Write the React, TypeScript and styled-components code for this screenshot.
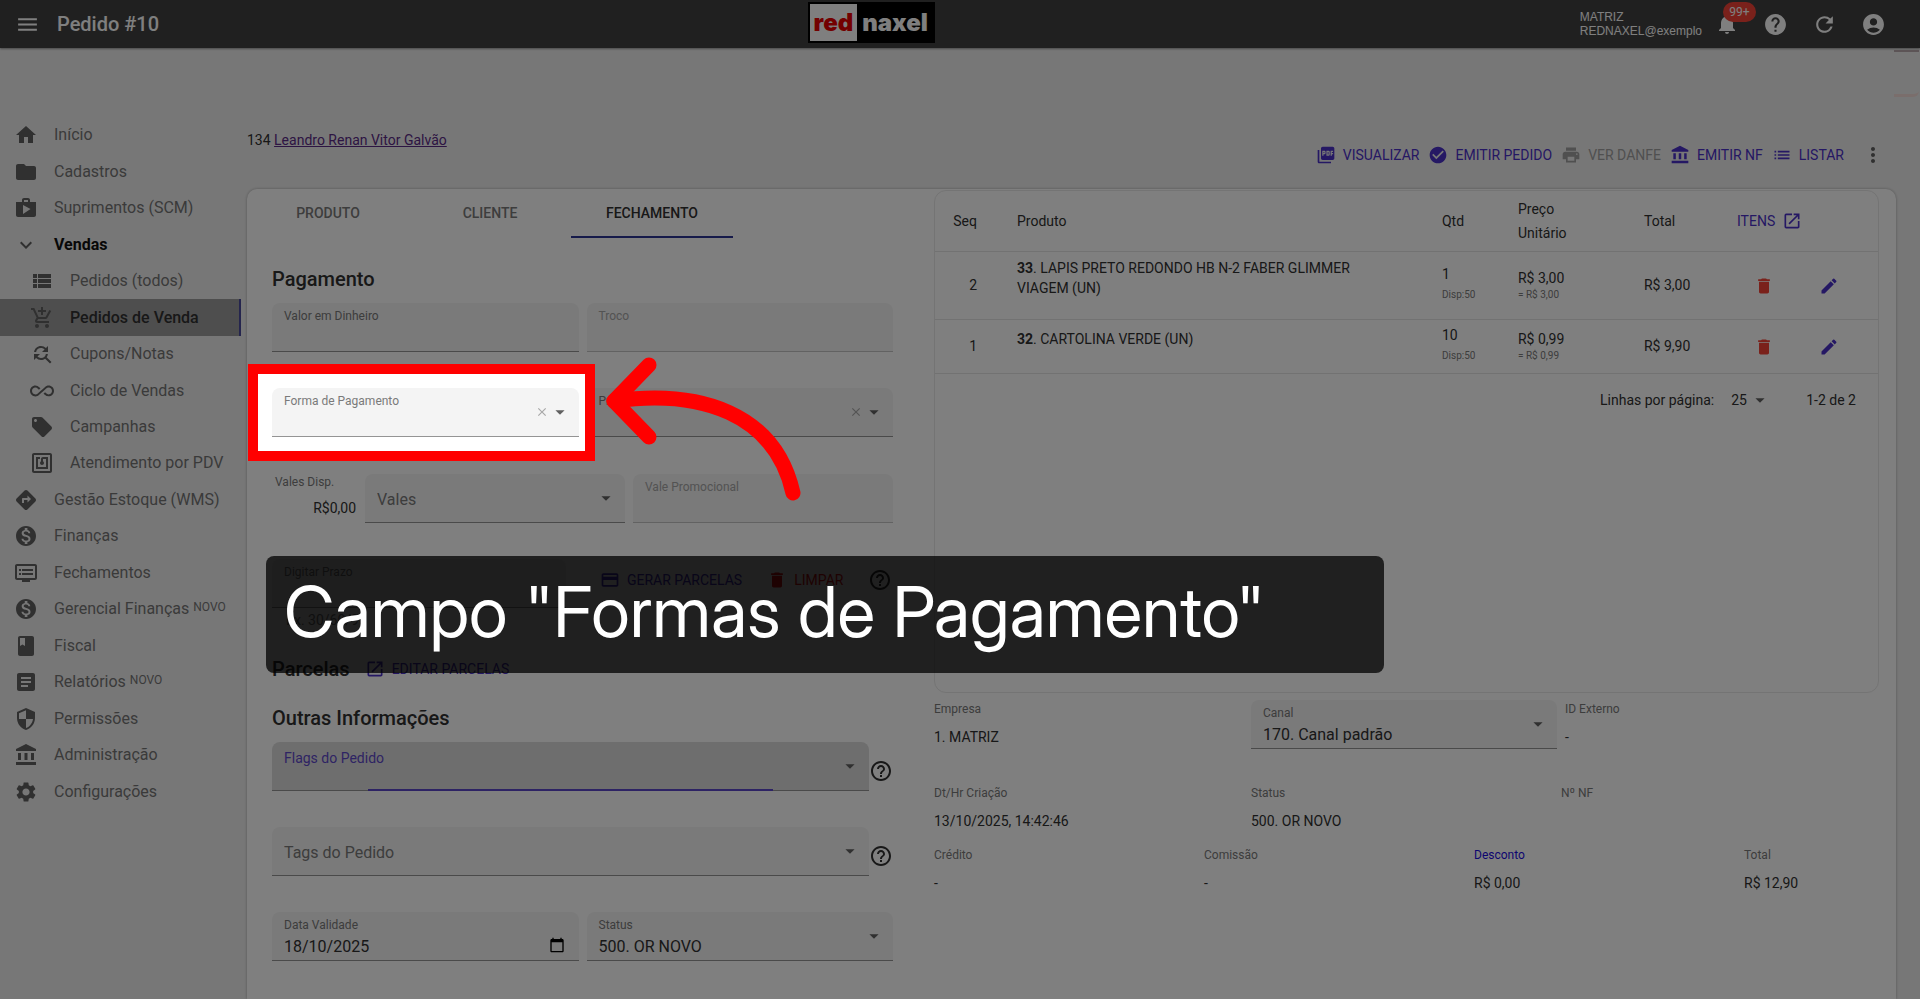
import React from "react";
import styled, { createGlobalStyle, css } from "styled-components";
import type { IconType } from "react-icons";
import {
  MdAccountBalance,
  MdAccountCircle,
  MdAddShoppingCart,
  MdAllInclusive,
  MdArrowDropDown,
  MdArticle,
  MdBook,
  MdCalendarToday,
  MdCheckCircle,
  MdClose,
  MdDelete,
  MdDirections,
  MdDvr,
  MdEdit,
  MdExpandMore,
  MdFindReplace,
  MdFolder,
  MdHelp,
  MdHelpOutline,
  MdHome,
  MdList,
  MdLocalOffer,
  MdMenu,
  MdMonetizationOn,
  MdMoreVert,
  MdNfc,
  MdNotifications,
  MdOpenInNew,
  MdPayment,
  MdPictureAsPdf,
  MdPrint,
  MdRefresh,
  MdSecurity,
  MdSettings,
  MdShop,
  MdViewList,
} from "react-icons/md";

const color = {
  primary: "#4a30c8",
  danger: "#f44336",
  text: "#303030",
  muted: "#7a7a7a",
  disabled: "#a6a6a6",
  line: "#e4e4e4",
};

const GlobalStyle = createGlobalStyle`
  *, *::before, *::after { box-sizing: border-box; }
  html { overflow: hidden; }
  body {
    margin: 0;
    background: #efefef;
    color: ${color.text};
    font: 400 14px/20px Roboto, sans-serif;
  }
  button, input, select { font: inherit; color: inherit; }
  button { border: 0; padding: 0; background: none; cursor: pointer; }
  svg { display: block; flex: none; }
`;

/* ---------- top bar ---------- */

const TopBar = styled.header`
  display: grid;
  grid-template-columns: 5fr auto 6fr;
  align-items: center;
  height: 48px;
  padding: 0 34px 0 15px;
  background: #414141;
  color: #fff;
  box-shadow: 0 1px 2px rgba(0, 0, 0, 0.4);
`;

const TopLeft = styled.div`
  display: flex;
  align-items: center;
  gap: 17px;
`;

const PageTitle = styled.h1`
  margin: 0;
  font-size: 20px;
  line-height: 24px;
  font-weight: 500;
`;

const Logo = styled.div`
  display: flex;
  align-items: stretch;
  align-self: start;
  height: 41px;
  margin-top: 2px;
  padding: 2px;
  background: #000;
  font: 900 24px/37px Inter, sans-serif;
`;

const LogoRed = styled.span`
  padding: 0 4px;
  background: #fff;
  color: #e60000;
`;

const LogoWhite = styled.span`
  padding: 0 5px;
`;

const TopRight = styled.div`
  display: flex;
  align-items: center;
  justify-content: flex-end;
  gap: 24px;
`;

const Account = styled.div`
  margin-right: -11px;
  font: 400 12px/14px "Liberation Sans", sans-serif;
`;

const IconButton = styled.button<{ $tone?: string }>`
  position: relative;
  display: inline-flex;
  vertical-align: middle;
  color: ${(p) => p.$tone ?? "inherit"};
`;

const Badge = styled.span`
  position: absolute;
  left: 8px;
  top: -10px;
  min-width: 33px;
  border-radius: 10px;
  background: ${color.danger};
  color: #fff;
  font-size: 12px;
  line-height: 20px;
  text-align: center;
`;

const Toast = styled.div`
  position: absolute;
  top: 50px;
  right: 1px;
  width: 25px;
  height: 47px;
  border-top: 2px solid #b8a8ac;
  border-bottom: 3px solid #f4dcd8;
  border-radius: 0 0 6px 0;
`;

/* ---------- side menu ---------- */

const Shell = styled.div`
  display: grid;
  grid-template-columns: 247px minmax(0, 1fr);
  min-height: calc(100vh - 48px);
`;

const SideNav = styled.nav`
  padding-top: 69px;
`;

const MenuList = styled.ul`
  display: grid;
  grid-auto-rows: 1fr;
  height: 693px;
  width: 241px;
  margin: 0;
  padding: 0;
  list-style: none;
`;

const MenuLink = styled.a<{ $nested?: boolean; $state?: "open" | "active" }>`
  display: flex;
  align-items: center;
  gap: 16px;
  height: 100%;
  padding-left: ${(p) => (p.$nested ? 30 : 14)}px;
  color: #757575;
  font-size: 16px;
  white-space: nowrap;
  text-decoration: none;

  svg { color: #606060; }

  ${(p) => p.$state === "open" && css`color: #101010; font-weight: 700;`}
  ${(p) =>
    p.$state === "active" &&
    css`
      background: #9c9c9c;
      border-right: 2px solid #4b4b9c;
      color: #303030;
      font-weight: 500;
    `}
`;

const NewTag = styled.sup`
  margin-left: 4px;
  font-size: 12px;
  line-height: 12px;
  vertical-align: 3px;
`;

type MenuEntry = {
  icon: IconType;
  label: string;
  nested?: boolean;
  state?: "open" | "active";
  isNew?: boolean;
};

const menu: MenuEntry[] = [
  { icon: MdHome, label: "Início" },
  { icon: MdFolder, label: "Cadastros" },
  { icon: MdShop, label: "Suprimentos (SCM)" },
  { icon: MdExpandMore, label: "Vendas", state: "open" },
  { icon: MdViewList, label: "Pedidos (todos)", nested: true },
  { icon: MdAddShoppingCart, label: "Pedidos de Venda", nested: true, state: "active" },
  { icon: MdFindReplace, label: "Cupons/Notas", nested: true },
  { icon: MdAllInclusive, label: "Ciclo de Vendas", nested: true },
  { icon: MdLocalOffer, label: "Campanhas", nested: true },
  { icon: MdNfc, label: "Atendimento por PDV", nested: true },
  { icon: MdDirections, label: "Gestão Estoque (WMS)" },
  { icon: MdMonetizationOn, label: "Finanças" },
  { icon: MdDvr, label: "Fechamentos" },
  { icon: MdMonetizationOn, label: "Gerencial Finanças", isNew: true },
  { icon: MdBook, label: "Fiscal" },
  { icon: MdArticle, label: "Relatórios", isNew: true },
  { icon: MdSecurity, label: "Permissões" },
  { icon: MdAccountBalance, label: "Administração" },
  { icon: MdSettings, label: "Configurações" },
];

/* ---------- main area ---------- */

const Main = styled.main`
  display: flex;
  flex-direction: column;
  padding-top: 82px;
`;

const OrderHeader = styled.div`
  display: flex;
  justify-content: space-between;
  align-items: flex-start;
  padding-right: 35px;
`;

const CustomerLink = styled.a`
  color: #5b2a86;
`;

const Actions = styled.div`
  display: flex;
  align-items: center;
  gap: 9px;
  height: 30px;
  margin-top: 10px;
`;

const TextButton = styled.button<{ $tone?: string }>`
  display: inline-flex;
  align-items: center;
  gap: 7px;
  color: ${(p) => p.$tone ?? color.primary};
  white-space: nowrap;

  &:disabled { color: #a0a0a0; }
`;

const MoreSlot = styled.span`
  display: flex;
  margin-left: 8px;
`;

const Card = styled.section`
  flex: 1;
  display: grid;
  grid-template-columns: minmax(0, 646fr) minmax(0, 945fr);
  gap: 41px;
  margin: 19px 24px 0 0;
  padding-right: 17px;
  border-radius: 10px 10px 0 0;
  background: #fff;
  box-shadow: 0 0 3px rgba(0, 0, 0, 0.3);
`;

const Tabs = styled.div`
  display: flex;
  height: 49px;
`;

const Tab = styled.button<{ $active?: boolean }>`
  width: 162px;
  border-bottom: 2px solid ${(p) => (p.$active ? "#2c3494" : "transparent")};
  color: ${(p) => (p.$active ? "#303030" : color.muted)};
  font-weight: 500;
`;

const Form = styled.form`
  padding: 25px 0 0 25px;
`;

const SectionHead = styled.div<{ $top?: number }>`
  display: flex;
  align-items: center;
  gap: 15px;
  height: 32px;
  margin: ${(p) => p.$top ?? 0}px 0 8px;
`;

const Heading = styled.h2`
  margin: 0;
  font-size: 20px;
  font-weight: 500;
`;

const Row = styled.div<{ $cols: string; $gap?: number; $after?: number }>`
  position: relative;
  display: grid;
  grid-template-columns: ${(p) => p.$cols};
  column-gap: ${(p) => p.$gap ?? 8}px;
  margin-bottom: ${(p) => p.$after ?? 36}px;
`;

const FieldCell = styled.div`
  position: relative;
`;

const FieldBox = styled.div<{ $focus?: boolean; $off?: boolean }>`
  position: relative;
  display: flex;
  flex-direction: column;
  height: 49px;
  padding-top: 4px;
  border-radius: 8px 8px 0 0;
  border-bottom: 1px solid ${(p) => (p.$off ? "#c4c4c4" : "#949494")};
  background: ${(p) => (p.$focus ? "#dcdcdc" : "#f4f4f4")};
`;

const FieldLabel = styled.label<{ $focus?: boolean; $off?: boolean }>`
  padding-left: 12px;
  color: ${(p) => (p.$focus ? "#5c48c8" : p.$off ? color.disabled : color.muted)};
  font-size: ${(p) => (p.$focus ? 14 : 12)}px;
  line-height: ${(p) => (p.$focus ? 24 : 18)}px;
`;

const controlStyle = css`
  flex: 1;
  min-height: 0;
  width: 100%;
  padding: 0 12px;
  border: 0;
  outline: 0;
  background: transparent;
  appearance: none;
  font-size: 16px;
  line-height: 20px;
`;

const Input = styled.input`
  ${controlStyle}
`;

const Select = styled.select<{ $placeholder?: boolean }>`
  ${controlStyle}
  ${(p) => p.$placeholder && css`color: ${color.muted};`}
`;

const Adornment = styled.span<{ $low?: boolean }>`
  position: absolute;
  right: ${(p) => (p.$low ? 14 : 8)}px;
  top: 0;
  display: flex;
  align-items: center;
  height: 100%;
  padding-top: ${(p) => (p.$low ? 18 : 0)}px;
  color: #606060;
  pointer-events: none;
`;

const ClearIcon = styled(MdClose)`
  color: #a8a8a8;
`;

const LoadingBar = styled.span`
  position: absolute;
  left: 16%;
  right: 16%;
  bottom: -1px;
  height: 2px;
  background: #5a46c8;
`;

const Helper = styled.div`
  height: 24px;
  padding-left: 14px;
  color: ${color.muted};
  line-height: 24px;
`;

const Stat = styled.div`
  padding: 0 1px 0 3px;
`;

const StatLabel = styled.div`
  color: ${color.muted};
  font-size: 12px;
  line-height: 16px;
`;

const StatValue = styled.div`
  margin-top: 8px;
  line-height: 20px;
  text-align: right;
`;

const InstallmentActions = styled.div`
  display: flex;
  align-items: center;
  gap: 25px;
  height: 42px;
  padding-left: 26px;
`;

const HelpSlot = styled.div`
  display: flex;
  align-items: center;
  padding-top: 8px;
`;

/* ---------- guided-tour layer ---------- */

const Spotlight = styled.div`
  position: absolute;
  z-index: 10;
  inset: -24px -16px -24px -24px;
  border: 10px solid #f00;
  box-shadow: 0 0 0 9999px rgba(0, 0, 0, 0.5);
  pointer-events: none;
`;

const TourArrow = styled.svg`
  position: absolute;
  z-index: 11;
  left: calc(100% + 21px);
  top: -37px;
  pointer-events: none;
`;

const TourCaption = styled.p`
  position: absolute;
  z-index: 12;
  left: -6px;
  top: -3px;
  width: 180%;
  height: 117px;
  margin: 0;
  padding: 0 18px;
  border-radius: 8px;
  background: rgba(0, 0, 0, 0.75);
  color: #fff;
  font: 400 70px/112px "Inter Display", Inter, sans-serif;
  font-variation-settings: "opsz" 32;
  white-space: nowrap;
`;

/* ---------- items ---------- */

const RightColumn = styled.div`
  padding-top: 1px;
`;

const Paper = styled.div`
  min-height: 503px;
  border: 1px solid #e8e8e8;
  border-radius: 12px;
`;

const ItemTable = styled.table`
  width: 100%;
  table-layout: fixed;
  border-collapse: collapse;
`;

const Col = styled.col<{ $w?: number }>`
  width: ${(p) => (p.$w ? `${p.$w}px` : "auto")};
`;

const HeadCell = styled.th<{ $right?: boolean }>`
  height: 60px;
  padding: 0 24px 0 16px;
  border-bottom: 1px solid ${color.line};
  font-weight: 400;
  line-height: 24px;
  text-align: ${(p) => (p.$right ? "right" : "left")};
`;

const Cell = styled.td<{ $align?: string }>`
  padding: ${(p) => (p.$align === "center" ? "0" : "0 24px 0 16px")};
  border-bottom: 1px solid ${color.line};
  text-align: ${(p) => p.$align ?? "left"};
  white-space: nowrap;
`;

const ProductCell = styled(Cell)`
  padding: 0 60px 15px 16px;
  white-space: normal;
`;

const EditCell = styled(Cell)`
  padding: 0 0 0 11px;
`;

const ItemRow = styled.tr<{ $tall?: boolean }>`
  height: ${(p) => (p.$tall ? 68 : 54)}px;
`;

const Small = styled.div<{ $line: number }>`
  color: ${color.muted};
  font-size: 10px;
  line-height: ${(p) => p.$line}px;
`;

const Pagination = styled.div`
  display: flex;
  align-items: center;
  justify-content: flex-end;
  height: 52px;
  padding-right: 22px;
`;

const PageSize = styled.span`
  position: relative;
  display: flex;
  align-items: center;
  margin: 0 35px 0 17px;
`;

const PageSizeSelect = styled.select`
  width: 40px;
  padding: 0;
  border: 0;
  background: transparent;
  appearance: none;
`;

const PageSizeArrow = styled(MdArrowDropDown)`
  position: absolute;
  right: 0;
  color: #606060;
  pointer-events: none;
`;

const InfoGrid = styled.div<{ $cols: string; $gap?: number; $before: number }>`
  display: grid;
  grid-template-columns: ${(p) => p.$cols};
  column-gap: ${(p) => p.$gap ?? 8}px;
  margin-top: ${(p) => p.$before}px;
`;

const InfoTerm = styled.div<{ $tone?: string }>`
  color: ${(p) => p.$tone ?? color.muted};
  font-size: 12px;
  line-height: 18px;
`;

const InfoValue = styled.div`
  margin-top: 9px;
  min-height: 20px;
`;

/* ---------- pieces ---------- */

function TextField(props: { id: string; label: string; value?: string; off?: boolean; children?: React.ReactNode }) {
  return (
    <FieldBox $off={props.off}>
      <FieldLabel htmlFor={props.id} $off={props.off}>{props.label}</FieldLabel>
      <Input id={props.id} defaultValue={props.value ?? ""} disabled={props.off} />
      {props.children}
    </FieldBox>
  );
}

function SelectField(props: {
  id: string;
  label: string;
  value?: string;
  clearable?: boolean;
  focus?: boolean;
  labelInside?: boolean;
}) {
  return (
    <FieldBox $focus={props.focus}>
      {!props.labelInside && (
        <FieldLabel htmlFor={props.id} $focus={props.focus}>{props.label}</FieldLabel>
      )}
      <Select id={props.id} aria-label={props.label} $placeholder={props.labelInside}>
        <option>{props.labelInside ? props.label : props.value ?? ""}</option>
      </Select>
      <Adornment>
        {props.clearable && <ClearIcon size={14} />}
        <MdArrowDropDown size={22} />
      </Adornment>
      {props.focus && <LoadingBar />}
    </FieldBox>
  );
}

function Info(props: { term: string; value?: string; tone?: string }) {
  return (
    <div>
      <InfoTerm $tone={props.tone}>{props.term}</InfoTerm>
      <InfoValue>{props.value}</InfoValue>
    </div>
  );
}

const items = [
  { seq: 2, code: "33", name: "LAPIS PRETO REDONDO HB N-2 FABER GLIMMER VIAGEM (UN)", qty: 1, stock: "Disp:50", price: "R$ 3,00", total: "R$ 3,00", tall: true },
  { seq: 1, code: "32", name: "CARTOLINA VERDE (UN)", qty: 10, stock: "Disp:50", price: "R$ 0,99", total: "R$ 9,90", tall: false },
];

export default function App() {
  return (
    <>
      <GlobalStyle />
      <TopBar>
        <TopLeft>
          <IconButton aria-label="Menu"><MdMenu size={25} /></IconButton>
          <PageTitle>Pedido #10</PageTitle>
        </TopLeft>
        <Logo>
          <LogoRed>red</LogoRed>
          <LogoWhite>naxel</LogoWhite>
        </Logo>
        <TopRight>
          <Account>
            MATRIZ
            <br />
            REDNAXEL@exemplo
          </Account>
          <IconButton aria-label="Notificações">
            <MdNotifications size={24} />
            <Badge>99+</Badge>
          </IconButton>
          <IconButton aria-label="Ajuda"><MdHelp size={25} /></IconButton>
          <IconButton aria-label="Atualizar"><MdRefresh size={25} /></IconButton>
          <IconButton aria-label="Conta"><MdAccountCircle size={25} /></IconButton>
        </TopRight>
      </TopBar>
      <Toast />

      <Shell>
        <SideNav>
          <MenuList>
            {menu.map(({ icon: Icon, label, nested, state, isNew }) => (
              <li key={label}>
                <MenuLink href="#" $nested={nested} $state={state}>
                  <Icon size={24} />
                  <span>
                    {label}
                    {isNew && <NewTag>NOVO</NewTag>}
                  </span>
                </MenuLink>
              </li>
            ))}
          </MenuList>
        </SideNav>

        <Main>
          <OrderHeader>
            <span>
              134 <CustomerLink href="#">Leandro Renan Vitor Galvão</CustomerLink>
            </span>
            <Actions>
              <TextButton><MdPictureAsPdf size={20} />VISUALIZAR</TextButton>
              <TextButton><MdCheckCircle size={20} />EMITIR PEDIDO</TextButton>
              <TextButton disabled><MdPrint size={20} />VER DANFE</TextButton>
              <TextButton><MdAccountBalance size={20} />EMITIR NF</TextButton>
              <TextButton><MdList size={20} />LISTAR</TextButton>
              <MoreSlot>
                <IconButton aria-label="Mais opções" $tone="#606060"><MdMoreVert size={24} /></IconButton>
              </MoreSlot>
            </Actions>
          </OrderHeader>

          <Card>
            <div>
              <Tabs role="tablist">
                <Tab role="tab">PRODUTO</Tab>
                <Tab role="tab">CLIENTE</Tab>
                <Tab role="tab" $active aria-selected>FECHAMENTO</Tab>
              </Tabs>
              <Form>
                <SectionHead><Heading>Pagamento</Heading></SectionHead>
                <Row $cols="1fr 1fr">
                  <TextField id="cash" label="Valor em Dinheiro" />
                  <TextField id="change" label="Troco" off />
                </Row>
                <Row $cols="1fr 1fr" $after={37}>
                  <FieldCell>
                    <SelectField id="method" label="Forma de Pagamento" clearable />
                    <Spotlight />
                    <TourArrow width="220" height="160" viewBox="600 350 220 160" fill="none" stroke="#f00" strokeWidth="15" strokeLinecap="round" strokeLinejoin="round">
                      <path d="M649 364 L614 400 L649 436" />
                      <path d="M614 400 C700 388 775 412 793 492" />
                    </TourArrow>
                  </FieldCell>
                  <SelectField id="term" label="Prazo" clearable />
                </Row>
                <Row $cols="85px 1fr 1fr">
                  <Stat>
                    <StatLabel>Vales Disp.</StatLabel>
                    <StatValue>R$0,00</StatValue>
                  </Stat>
                  <SelectField id="voucher" label="Vales" labelInside />
                  <TextField id="promo" label="Vale Promocional" off />
                </Row>
                <Row $cols="294px 1fr" $after={21}>
                  <div>
                    <TextField id="days" label="Digitar Prazo" />
                    <Helper>Ex. 30/60/90</Helper>
                  </div>
                  <InstallmentActions>
                    <TextButton type="button"><MdPayment size={20} />GERAR PARCELAS</TextButton>
                    <TextButton type="button" $tone="#f01010"><MdDelete size={20} />LIMPAR</TextButton>
                    <IconButton type="button" aria-label="Ajuda sobre parcelas"><MdHelpOutline size={24} /></IconButton>
                  </InstallmentActions>
                  <TourCaption>Campo "Formas de Pagamento"</TourCaption>
                </Row>
                <SectionHead>
                  <Heading>Parcelas</Heading>
                  <TextButton type="button"><MdOpenInNew size={20} />EDITAR PARCELAS</TextButton>
                </SectionHead>
                <SectionHead $top={17}><Heading>Outras Informações</Heading></SectionHead>
                <Row $cols="1fr 24px" $gap={0}>
                  <SelectField id="flags" label="Flags do Pedido" focus />
                  <HelpSlot>
                    <IconButton type="button" aria-label="Ajuda sobre flags"><MdHelpOutline size={24} /></IconButton>
                  </HelpSlot>
                </Row>
                <Row $cols="1fr 24px" $gap={0}>
                  <SelectField id="tags" label="Tags do Pedido" labelInside />
                  <HelpSlot>
                    <IconButton type="button" aria-label="Ajuda sobre tags"><MdHelpOutline size={24} /></IconButton>
                  </HelpSlot>
                </Row>
                <Row $cols="1fr 1fr">
                  <TextField id="valid" label="Data Validade" value="18/10/2025">
                    <Adornment $low><MdCalendarToday size={16} color="#000" /></Adornment>
                  </TextField>
                  <SelectField id="status" label="Status" value="500. OR NOVO" />
                </Row>
              </Form>
            </div>

            <RightColumn>
              <Paper>
                <ItemTable>
                  <colgroup>
                    <Col $w={66} />
                    <Col />
                    <Col $w={76} />
                    <Col $w={126} />
                    <Col $w={93} />
                    <Col $w={87} />
                    <Col $w={70} />
                  </colgroup>
                  <thead>
                    <tr>
                      <HeadCell $right>Seq</HeadCell>
                      <HeadCell>Produto</HeadCell>
                      <HeadCell>Qtd</HeadCell>
                      <HeadCell>Preço Unitário</HeadCell>
                      <HeadCell>Total</HeadCell>
                      <HeadCell colSpan={2}>
                        <TextButton>ITENS<MdOpenInNew size={20} /></TextButton>
                      </HeadCell>
                    </tr>
                  </thead>
                  <tbody>
                    {items.map((item) => (
                      <ItemRow key={item.seq} $tall={item.tall}>
                        <Cell $align="right">{item.seq}</Cell>
                        <ProductCell><b>{item.code}</b>. {item.name}</ProductCell>
                        <Cell>
                          {item.qty}
                          <Small $line={22}>{item.stock}</Small>
                        </Cell>
                        <Cell>
                          {item.price}
                          <Small $line={14}>= {item.price}</Small>
                        </Cell>
                        <Cell>{item.total}</Cell>
                        <Cell $align="center">
                          <IconButton aria-label="Excluir item" $tone={color.danger}><MdDelete size={20} /></IconButton>
                        </Cell>
                        <EditCell>
                          <IconButton aria-label="Editar item" $tone={color.primary}><MdEdit size={20} /></IconButton>
                        </EditCell>
                      </ItemRow>
                    ))}
                  </tbody>
                </ItemTable>
                <Pagination>
                  <label htmlFor="page-size">Linhas por página:</label>
                  <PageSize>
                    <PageSizeSelect id="page-size"><option>25</option></PageSizeSelect>
                    <PageSizeArrow size={22} />
                  </PageSize>
                  <span>1-2 de 2</span>
                </Pagination>
              </Paper>

              <InfoGrid $cols="309fr 306fr 314fr" $before={7}>
                <Info term="Empresa" value="1. MATRIZ" />
                <SelectField id="channel" label="Canal" value="170. Canal padrão" />
                <Info term="ID Externo" value="-" />
              </InfoGrid>
              <InfoGrid $cols="309fr 302fr 318fr" $before={35}>
                <Info term="Dt/Hr Criação" value="13/10/2025, 14:42:46" />
                <Info term="Status" value="500. OR NOVO" />
                <Info term="Nº NF" />
              </InfoGrid>
              <InfoGrid $cols="2fr 2fr 2fr 1fr" $gap={0} $before={15}>
                <Info term="Crédito" value="-" />
                <Info term="Comissão" value="-" />
                <Info term="Desconto" value="R$ 0,00" tone="#1a0ae0" />
                <Info term="Total" value="R$ 12,90" />
              </InfoGrid>
            </RightColumn>
          </Card>
        </Main>
      </Shell>
    </>
  );
}
